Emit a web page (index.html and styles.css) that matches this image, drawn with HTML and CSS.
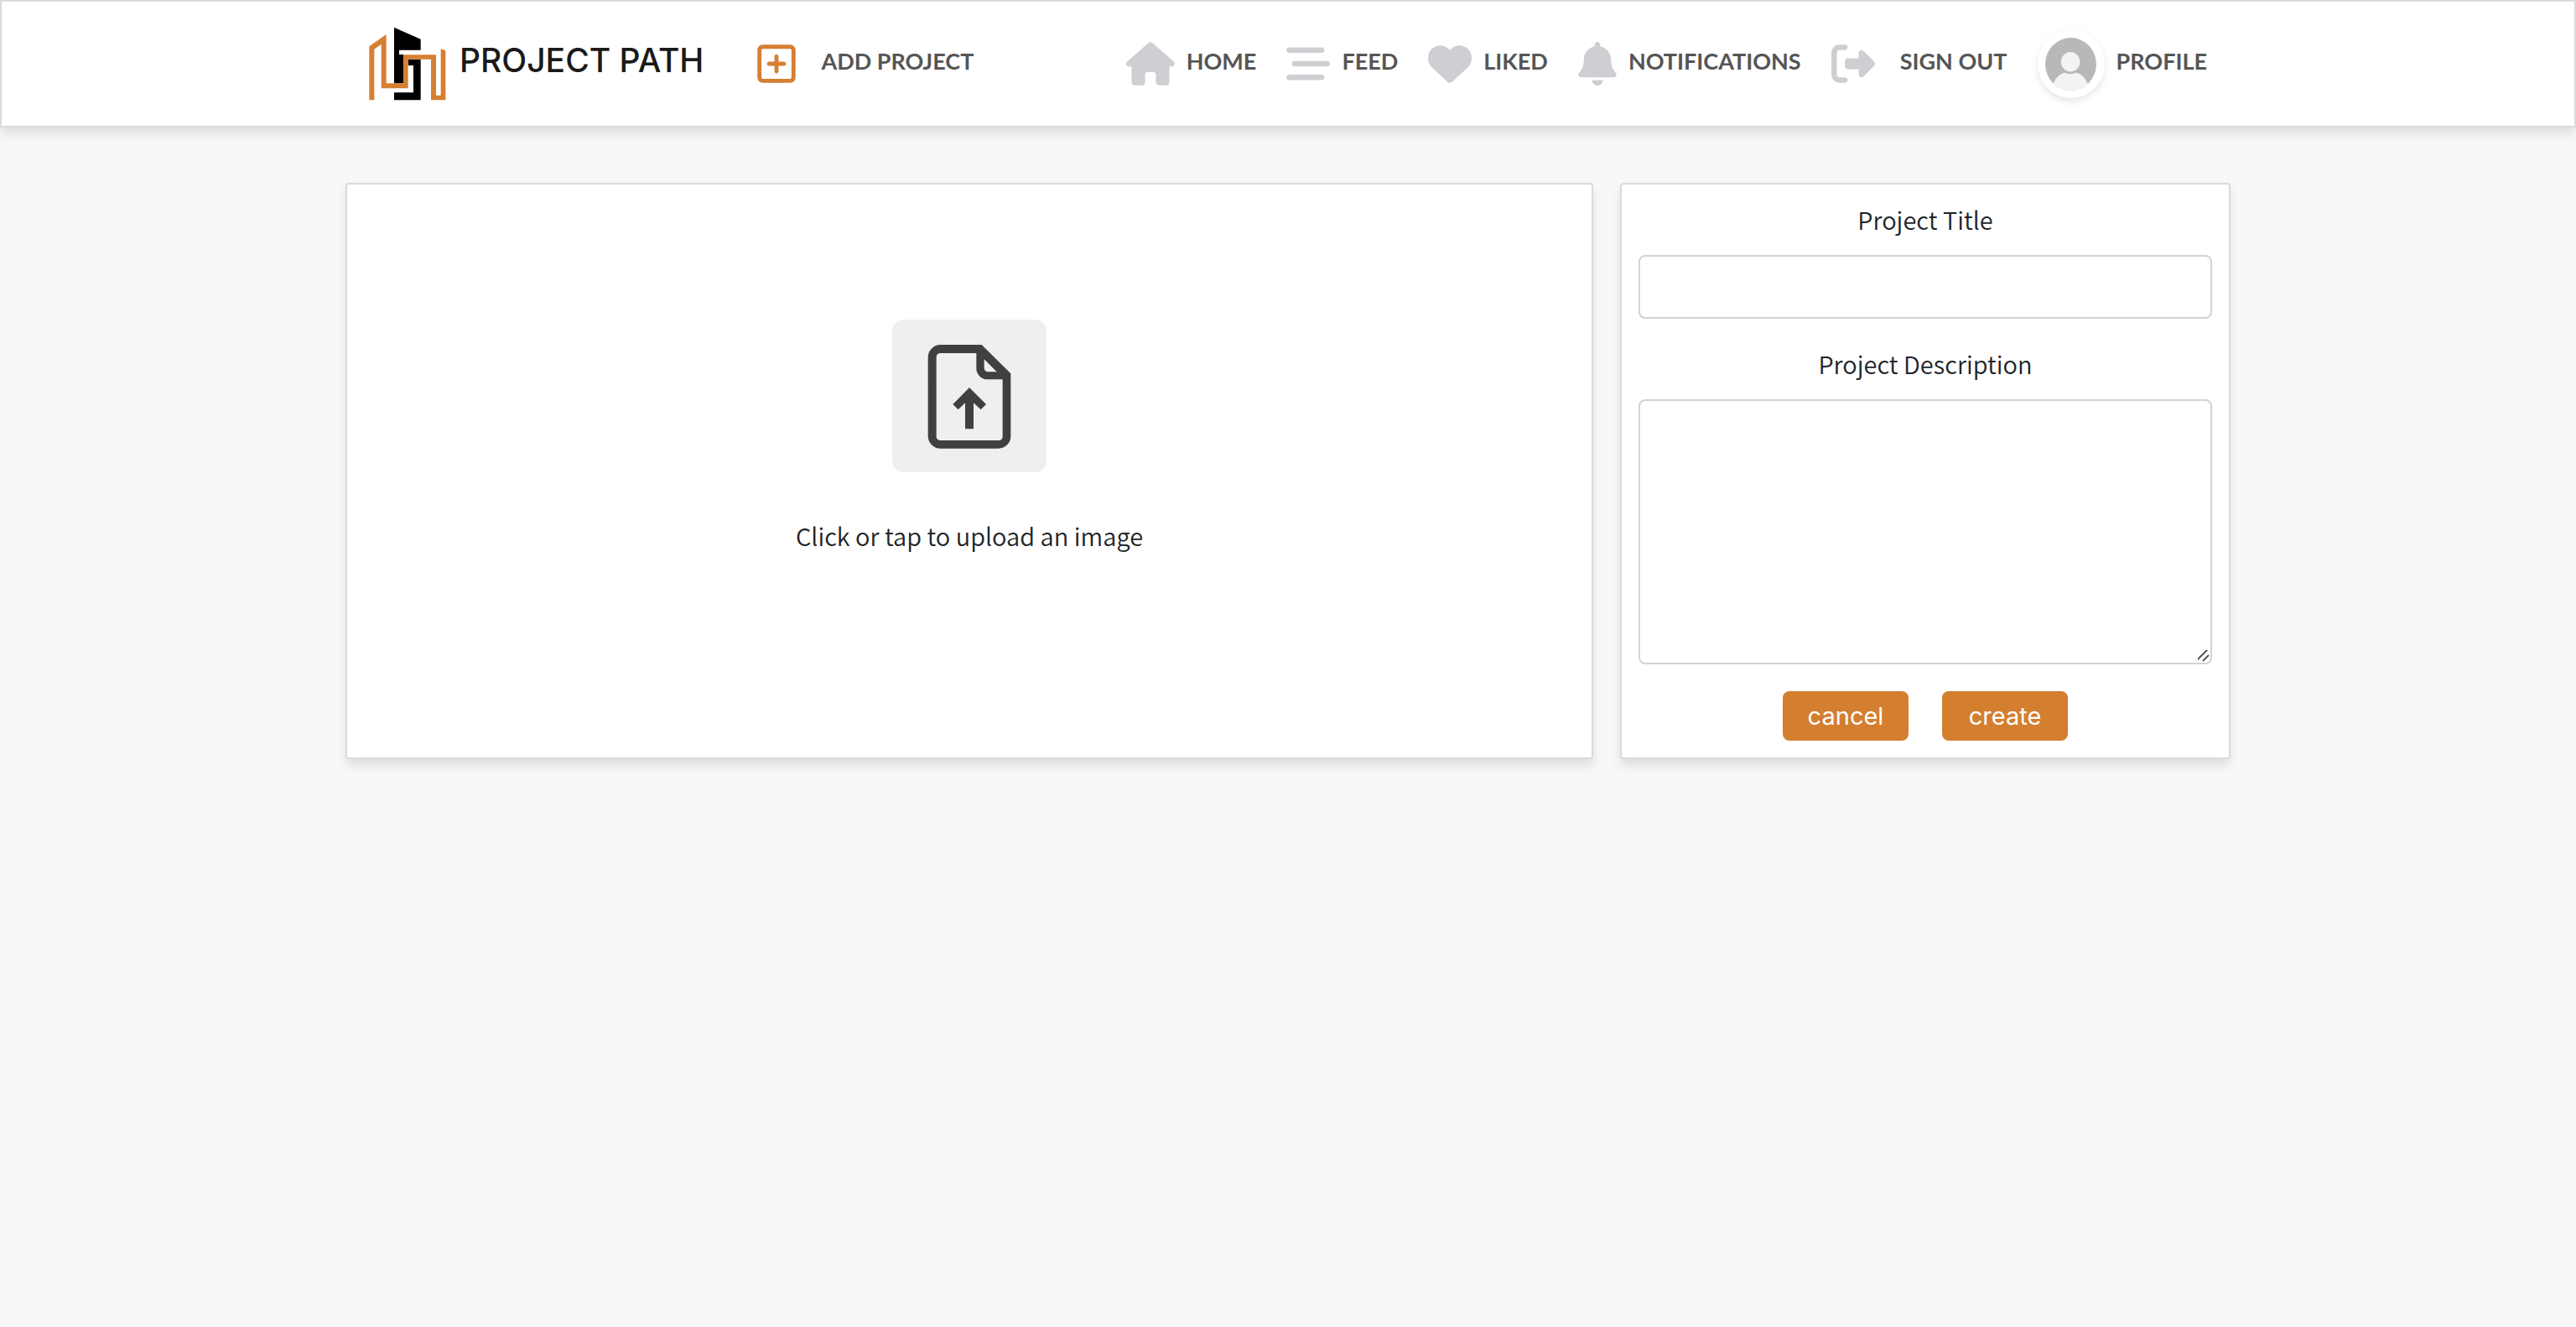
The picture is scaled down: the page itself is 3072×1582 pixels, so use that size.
FILE: index.html
```html
<!DOCTYPE html>
<html lang="en">
<head>
  <meta charset="utf-8">
  <meta name="viewport" content="width=device-width, initial-scale=1">
  <title>Project Path</title>
  <link rel="stylesheet" href="styles.css">
</head>
<body>
  <header class="navbar">
    <div class="container navbar-inner">
      <a class="brand" href="#">
        <svg class="brand-mark" viewBox="118 98 276 264" aria-hidden="true">
          <path d="M208 100 303 142V181H226V197H242V300H208ZM258 214H303V360H208V333H277V236H258Z"/>
          <path class="brand-line" d="M119 168 180 125V300H242V198H358V343H375V177L392 183V360H340V214H258V318H162V160L137 178V360H119Z"/>
        </svg>
        <span class="brand-name">PROJECT PATH</span>
      </a>
      <a class="nav-link nav-link-wide add-link" href="#">
        <svg class="icon icon-narrow" viewBox="0 0 448 512" aria-hidden="true"><path d="M64 80c-8.8 0-16 7.2-16 16V416c0 8.800 7.200 16 16 16H384c8.800 0 16-7.200 16-16V96c0-8.800-7.200-16-16-16H64zM0 96C0 60.700 28.700 32 64 32H384c35.300 0 64 28.700 64 64V416c0 35.300-28.700 64-64 64H64c-35.300 0-64-28.700-64-64V96zM200 344V280H136c-13.300 0-24-10.700-24-24s10.700-24 24-24h64V168c0-13.300 10.700-24 24-24s24 10.700 24 24v64h64c13.300 0 24 10.700 24 24s-10.700 24-24 24H248v64c0 13.300-10.700 24-24 24s-24-10.700-24-24z"/></svg>
        <span class="nav-label">ADD PROJECT</span>
      </a>
      <nav class="nav-links">
        <a class="nav-link" href="#">
          <svg class="icon icon-wide" viewBox="0 0 576 512" aria-hidden="true"><path d="M575.8 255.5c0 18-15 32.100-32 32.100h-32l.7 160.200c0 2.700-.2 5.400-.5 8.100V472c0 22.100-17.900 40-40 40H456c-1.100 0-2.200 0-3.300-.1c-1.400 .1-2.800 .1-4.200 .1H416 392c-22.100 0-40-17.900-40-40V448 384c0-17.700-14.300-32-32-32H256c-17.700 0-32 14.300-32 32v64 24c0 22.100-17.900 40-40 40H160 128.100c-1.500 0-3-.1-4.500-.2c-1.200 .1-2.400 .2-3.600 .2H104c-22.100 0-40-17.900-40-40V360c0-.9 0-1.900 .1-2.800V287.600H32c-18 0-32-14-32-32.100c0-9 3-17 10-24L266.400 8c7-7 15-8 22-8s15 2 21 7L564.800 231.500c8 7 12 15 11 24z"/></svg>
          <span class="nav-label">HOME</span>
        </a>
        <a class="nav-link" href="#">
          <svg class="icon" viewBox="0 0 512 512" aria-hidden="true"><path d="M0 96C0 78.300 14.300 64 32 64H416c17.700 0 32 14.300 32 32s-14.300 32-32 32H32C14.300 128 0 113.700 0 96zM64 256c0-17.700 14.300-32 32-32H480c17.700 0 32 14.300 32 32s-14.300 32-32 32H96c-17.700 0-32-14.300-32-32zM448 416c0 17.700-14.300 32-32 32H32c-17.700 0-32-14.300-32-32s14.300-32 32-32H416c17.700 0 32 14.300 32 32z"/></svg>
          <span class="nav-label">FEED</span>
        </a>
        <a class="nav-link" href="#">
          <svg class="icon" viewBox="0 0 512 512" aria-hidden="true"><path d="M47.600 300.400L228.300 469.100c7.500 7 17.400 10.900 27.700 10.900s20.200-3.900 27.700-10.900L464.400 300.400c30.400-28.300 47.600-68 47.600-109.500v-5.800c0-69.900-50.500-129.500-119.400-141C347 36.500 300.600 51.400 268 84L256 96 244 84c-32.600-32.600-79-47.500-124.600-39.900C50.500 55.600 0 115.200 0 185.100v5.800c0 41.500 17.200 81.200 47.600 109.500z"/></svg>
          <span class="nav-label">LIKED</span>
        </a>
        <a class="nav-link" href="#">
          <svg class="icon icon-narrow" viewBox="0 0 448 512" aria-hidden="true"><path d="M224 0c-17.700 0-32 14.300-32 32V51.200C119 66 64 130.600 64 208v18.800c0 47-17.300 92.400-48.500 127.600l-7.400 8.300c-8.400 9.400-10.400 22.900-5.300 34.400S19.400 416 32 416H416c12.600 0 24-7.400 29.200-18.900s3.100-25-5.300-34.400l-7.400-8.300C401.300 319.200 384 273.900 384 226.800V208c0-77.400-55-142-128-156.800V32c0-17.700-14.300-32-32-32zm45.300 493.300c12-12 18.700-28.300 18.700-45.300H224 160c0 17 6.700 33.300 18.700 45.300s28.300 18.700 45.300 18.700s33.300-6.700 45.300-18.700z"/></svg>
          <span class="nav-label">NOTIFICATIONS</span>
        </a>
        <a class="nav-link nav-link-wide" href="#">
          <svg class="icon" viewBox="0 0 512 512" aria-hidden="true"><path d="M377.900 105.900L500.700 228.700c7.200 7.200 11.300 17.100 11.300 27.300s-4.100 20.100-11.300 27.300L377.900 406.100c-6.400 6.400-15 9.900-24 9.900c-18.700 0-33.900-15.200-33.900-33.900l0-62.100-128 0c-17.700 0-32-14.300-32-32l0-64c0-17.700 14.300-32 32-32l128 0 0-62.100c0-18.700 15.200-33.900 33.900-33.900c9 0 17.600 3.600 24 9.900zM160 96L96 96c-17.700 0-32 14.300-32 32l0 256c0 17.700 14.300 32 32 32l64 0c17.700 0 32 14.300 32 32s-14.300 32-32 32l-64 0c-53 0-96-43-96-96L0 128C0 75 43 32 96 32l64 0c17.700 0 32 14.300 32 32s-14.300 32-32 32z"/></svg>
          <span class="nav-label">SIGN OUT</span>
        </a>
        <a class="nav-link" href="#">
          <span class="avatar">
            <svg class="avatar-image" viewBox="0 0 178 184" aria-hidden="true">
              <defs><clipPath id="avatar-clip"><ellipse cx="89" cy="92" rx="89" ry="92"/></clipPath></defs>
              <g clip-path="url(#avatar-clip)">
                <path fill="#b8b8b8" d="M0 0H178V184H0Z"/>
                <path fill="#f3f3f3" d="M28 160C36 141 48 127 67 121Q88 131 109 121C128 127 140 141 148 160V184H28Z"/>
                <ellipse fill="#f3f3f3" cx="88" cy="84" rx="33" ry="34"/>
              </g>
            </svg>
          </span>
          <span class="nav-label">PROFILE</span>
        </a>
      </nav>
    </div>
  </header>

  <main class="container">
    <form class="create-form">
      <label class="card upload">
        <input class="file-input" type="file" accept="image/*">
        <svg class="upload-icon" viewBox="432 63 552 546" aria-hidden="true">
          <rect fill="#efefef" x="432" y="63" width="552" height="546" rx="40"/>
          <path fill="#404040" fill-rule="evenodd" d="M605 153H752L856 256V480A44 44 0 0 1 812 524H605A45 45 0 0 1 560 480V198A45 45 0 0 1 605 153ZM604 183A14 14 0 0 0 590 197V482A13 13 0 0 0 604 495H814A13 13 0 0 0 827 482V277H773A40 40 0 0 1 733 237V183ZM761 205 806 250H775A14 14 0 0 1 761 236Z"/>
          <path fill="#404040" d="M708 306 768 366 749 385 723 361V454H693V361L668 385 649 366Z"/>
        </svg>
        <span class="form-text">Click or tap to upload an image</span>
      </label>
      <div class="card details">
        <label class="form-text" for="title">Project Title</label>
        <input class="field" id="title" name="title" type="text">
        <label class="form-text" for="description">Project Description</label>
        <textarea class="field field-area" id="description" name="description"></textarea>
        <div class="actions">
          <button class="button" type="button">cancel</button>
          <button class="button" type="submit">create</button>
        </div>
      </div>
    </form>
  </main>
</body>
</html>
```
FILE: styles.css
```css
*,
*::before,
*::after {
  box-sizing: border-box;
}

body {
  margin: 0;
  background: #f8f8f8;
  color: #212529;
  font-family: "Noto Sans CJK SC", "Open Sans", sans-serif;
  font-size: 29px;
}

.container {
  max-width: 2280px;
  margin: 0 auto;
}

/* Navigation bar */

.navbar {
  background: #fff;
  border: 2px solid #dadadf;
  box-shadow: 0 8px 12px rgba(0, 0, 0, 0.1);
}

.navbar-inner {
  display: flex;
  align-items: center;
  min-height: 148px;
  padding: 0 44px;
}

.brand,
.nav-link {
  display: flex;
  align-items: center;
  text-decoration: none;
  white-space: nowrap;
}

.brand {
  gap: 16px;
  color: #1a1a1a;
}

.brand-mark {
  width: 92px;
  height: 88px;
}

.brand-line {
  fill: #d67f32;
}

.brand-name {
  padding-bottom: 8px;
  font: 500 39px/48px Inter, sans-serif;
}

.nav-links {
  display: flex;
  align-items: center;
  gap: 36px;
  margin-left: auto;
}

.nav-link {
  gap: 14px;
  color: #555;
}

.nav-link-wide {
  gap: 30px;
}

.add-link {
  margin-left: 64px;
}

.nav-label {
  padding-bottom: 6px;
  font: 700 27px/36px Lato, sans-serif;
}

.icon {
  width: 52px;
  height: 52px;
  fill: #cfced3;
}

.icon-narrow {
  width: 46px;
}

.icon-wide {
  width: 58px;
}

.add-link .icon {
  fill: #d67f32;
}

.avatar {
  display: grid;
  place-items: center;
  width: 80px;
  height: 82px;
  border-radius: 50%;
  background: #fff;
  box-shadow: 0 4px 8px rgba(0, 0, 0, 0.1);
}

.avatar-image {
  width: 61px;
  height: 63px;
}

/* Project form */

.create-form {
  display: grid;
  grid-template-columns: 1488fr 728fr;
  gap: 32px;
  padding: 66px 16px;
}

.card {
  background: #fff;
  border: 2px solid #dadadf;
  border-radius: 4px;
  box-shadow: 0 8px 12px rgba(0, 0, 0, 0.1);
}

.form-text {
  padding-bottom: 6px;
  font-weight: 350;
  line-height: 42px;
  text-align: center;
}

.upload {
  display: flex;
  flex-direction: column;
  align-items: center;
  gap: 54px;
  padding-top: 161px;
  cursor: pointer;
}

.upload-icon {
  width: 184px;
  height: 182px;
}

.file-input {
  position: absolute;
  width: 1px;
  height: 1px;
  opacity: 0;
}

.details {
  display: flex;
  flex-direction: column;
  padding: 20px;
}

.field {
  width: 100%;
  height: 76px;
  margin: 16px 0 32px;
  padding: 12px 24px;
  border: 2px solid #ced4da;
  border-radius: 8px;
  background: #fff;
  color: inherit;
  font: inherit;
}

.field-area {
  height: 316px;
  resize: vertical;
}

.field-area::-webkit-scrollbar {
  width: 20px;
  height: 20px;
}

.field-area::-webkit-resizer {
  background: url("data:image/svg+xml,%3Csvg xmlns='http://www.w3.org/2000/svg' width='20' height='20' viewBox='0 0 20 20'%3E%3Cpath d='M3 18 18 3M11 18 18 11' stroke='%23555' stroke-width='2'/%3E%3C/svg%3E") right bottom no-repeat;
}

.actions {
  display: flex;
  justify-content: center;
  gap: 40px;
}

.button {
  width: 150px;
  height: 59px;
  padding: 0;
  border: 0;
  border-radius: 8px;
  background: #d47e30;
  color: #fff;
  font: 400 29px/40px Inter, sans-serif;
  cursor: pointer;
}
```
